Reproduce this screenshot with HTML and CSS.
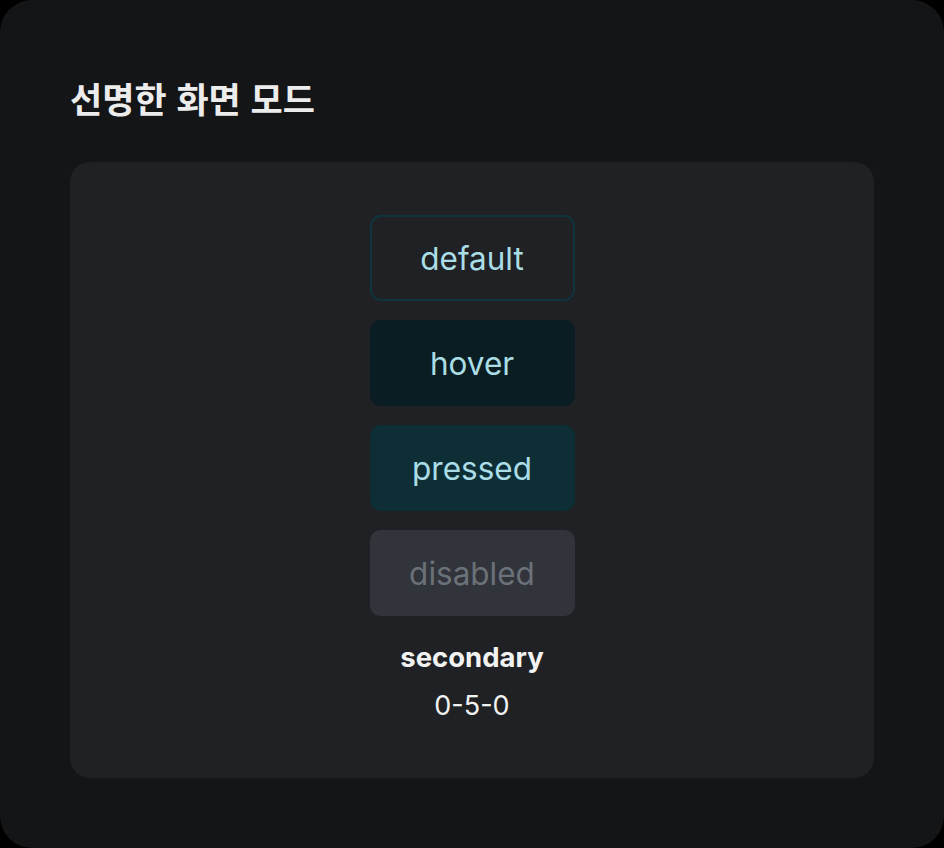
FILE: index.html
```html
<!DOCTYPE html>
<html lang="ko">
<head>
    <meta charset="UTF-8">
    <meta name="viewport" content="width=device-width, initial-scale=1.0">
    <title>선명한 화면 모드</title>
    <link rel="stylesheet" href="styles.css">
</head>
<body>
    <div class="frame">
        <h1 class="title">선명한 화면 모드</h1>

        <!-- Button states -->
        <div class="card">
            <div class="states">
                <button class="btn btn-default">default</button>
                <button class="btn btn-hover">hover</button>
                <button class="btn btn-pressed">pressed</button>
                <button class="btn btn-disabled" disabled>disabled</button>
            </div>
            <div class="caption">
                <div class="caption-name">secondary</div>
                <div class="caption-code">0-5-0</div>
            </div>
        </div>
    </div>
</body>
</html>
```

FILE: styles.css
```css
body { margin: 0; background-color: #000; font-family: Inter, "Noto Sans CJK KR", sans-serif; }
.frame { width: 944px; height: 848px; box-sizing: border-box; padding: 78px 70px 0; background-color: #141517; border-radius: 32px; overflow: hidden; }
.title { margin: 0; font-size: 35px; line-height: 40px; font-weight: 700; color: #ececec; font-family: "Noto Sans CJK KR", sans-serif; }
.card { margin-top: 44px; height: 616px; box-sizing: border-box; padding-top: 53px; background-color: #1f2124; border-radius: 20px; display: flex; flex-direction: column; align-items: center; }
.states { display: flex; flex-direction: column; gap: 19px; }
.btn { width: 205px; height: 86px; border: 2px solid transparent; border-radius: 11px; font-family: Inter, sans-serif; font-size: 31.5px; color: #abdde6; background: none; padding: 0; }
.btn-default { border-color: #10343d; }
.btn-hover { background-color: #0a1d22; }
.btn-pressed { background-color: #0e2e36; }
.btn-disabled { background-color: #31343a; color: #6b7178; }
.caption { margin-top: 24px; text-align: center; color: #f2f2f2; }
.caption-name { font-size: 27.5px; font-weight: 700; line-height: 34px; }
.caption-code { margin-top: 15px; font-size: 27px; line-height: 34px; }
```
